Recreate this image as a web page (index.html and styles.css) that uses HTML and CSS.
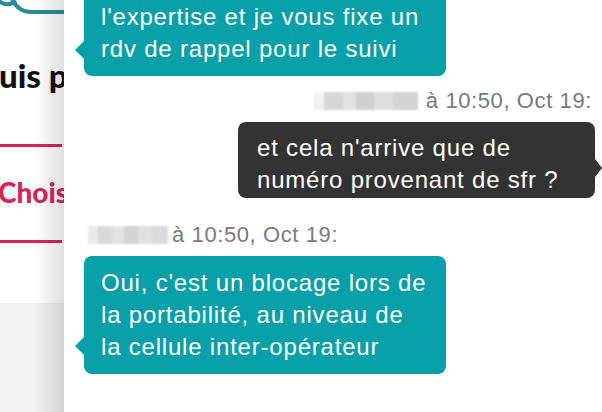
FILE: index.html
```html
<!DOCTYPE html>
<html lang="fr">
<head>
<meta charset="utf-8">
<title>Chat</title>
<link rel="stylesheet" href="styles.css">
</head>
<body>
<div class="page">
  <aside class="side">
    <div class="side-top">
      <svg class="logo" width="64" height="16" viewBox="0 0 64 16">
        <path d="M-2 0 Q 6 8 16 1" fill="none" stroke="#2b8c93" stroke-width="4"/>
        <path d="M12 -1 Q 18 12 32 12 L 64 12" fill="none" stroke="#2b8c93" stroke-width="4" stroke-linecap="round"/>
      </svg>
      <div class="side-title">uis p</div>
      <div class="side-rule first"></div>
      <div class="side-choice">Chois</div>
      <div class="side-rule"></div>
    </div>
    <div class="side-bottom"></div>
  </aside>
  <main class="chat">
    <div class="msg agent first-msg">
      <div class="bubble teal">l'expertise et je vous fixe un<br>rdv de rappel pour le suivi</div>
    </div>
    <div class="stamp right"><span class="blur wide"></span>à 10:50, Oct 19:</div>
    <div class="msg user">
      <div class="bubble dark">et cela n'arrive que de<br>numéro provenant de sfr ?</div>
    </div>
    <div class="stamp left"><span class="blur"></span>à 10:50, Oct 19:</div>
    <div class="msg agent">
      <div class="bubble teal tall">Oui, c'est un blocage lors de<br>la portabilité, au niveau de<br>la cellule inter-opérateur</div>
    </div>
  </main>
</div>
</body>
</html>
```
FILE: styles.css
```css
html, body {
  margin: 0;
  padding: 0;
  background: #fff;
}
.page {
  display: flex;
  width: 602px;
  height: 412px;
  overflow: hidden;
  font-family: "Liberation Sans", Arial, sans-serif;
}
.side {
  position: relative;
  width: 64px;
  flex: 0 0 64px;
  display: flex;
  flex-direction: column;
  overflow: hidden;
  background: #fff;
}
.side::after {
  content: "";
  position: absolute;
  top: 0;
  bottom: 0;
  right: 0;
  width: 30px;
  background: linear-gradient(to right, rgba(0,0,0,0), rgba(0,0,0,0.13));
  pointer-events: none;
}
.side-top {
  height: 303px;
  display: flex;
  flex-direction: column;
}
.logo {
  display: block;
}
.side-title {
  margin-top: 41px;
  font-family: Lato, "Liberation Sans", sans-serif;
  font-weight: 900;
  font-size: 33px;
  line-height: 37px;
  color: #111;
  white-space: nowrap;
  margin-left: -1px;
}
.side-rule {
  height: 3px;
  width: 62px;
  background: #d8245a;
}
.side-rule.first {
  margin-top: 50px;
}
.side-choice {
  margin-top: 27px;
  margin-bottom: 30px;
  font-family: Lato, "Liberation Sans", sans-serif;
  font-weight: 900;
  font-size: 28px;
  line-height: 36px;
  color: #d8245a;
  white-space: nowrap;
  margin-left: -2px;
}
.side-bottom {
  flex: 1;
  background: #f2f2f2;
}
.chat {
  flex: 1;
  display: flex;
  flex-direction: column;
  background: #fff;
}
.msg {
  display: flex;
}
.msg.agent {
  padding-left: 20px;
}
.msg.user {
  justify-content: flex-end;
  padding-right: 7px;
  margin-top: 9px;
}
.first-msg {
  margin-top: -10px;
}
.bubble {
  position: relative;
  box-sizing: border-box;
  font-size: 24px;
  letter-spacing: 0.8px;
  line-height: 32px;
  color: #fff;
  white-space: nowrap;
  border-radius: 8px;
}
.bubble.teal {
  width: 362px;
  background: #07a0a8;
  padding: 11px 17px 11px 17px;
}
.bubble.teal::before {
  content: "";
  position: absolute;
  left: -9px;
  bottom: 16px;
  width: 0;
  height: 0;
  border-top: 10px solid transparent;
  border-bottom: 10px solid transparent;
  border-right: 10px solid #07a0a8;
}
.bubble.tall::before {
  bottom: 18px;
}
.bubble.dark {
  width: 357px;
  background: #333333;
  padding: 10px 18px 2px 19px;
}
.bubble.dark::after {
  content: "";
  position: absolute;
  right: -7px;
  bottom: 21px;
  width: 0;
  height: 0;
  border-top: 9px solid transparent;
  border-bottom: 9px solid transparent;
  border-left: 7px solid #333333;
}
.stamp {
  display: flex;
  align-items: center;
  font-size: 22px;
  letter-spacing: 0.6px;
  line-height: 24px;
  color: #7a7a7a;
  white-space: nowrap;
}
.stamp.right {
  justify-content: flex-end;
  padding-right: 10px;
  margin-top: 13px;
}
.stamp.left {
  padding-left: 24px;
  margin-top: 25px;
  margin-bottom: 9px;
}
.blur {
  display: inline-block;
  width: 80px;
  height: 18px;
  margin-right: 4px;
  filter: blur(1.2px);
  background:
    linear-gradient(to right, #e9e9e9 0 12%, #d9d9d9 12% 30%, #e2e2e2 30% 45%, #d4d4d4 45% 62%, #e0e0e0 62% 80%, #dadada 80% 100%);
}
.blur.wide {
  width: 104px;
  margin-right: 8px;
  background:
    linear-gradient(to right, #f1f1f1 0 10%, #d6d6d6 10% 28%, #e1e1e1 28% 40%, #cfcfcf 40% 58%, #dedede 58% 76%, #d3d3d3 76% 100%);
}
```
